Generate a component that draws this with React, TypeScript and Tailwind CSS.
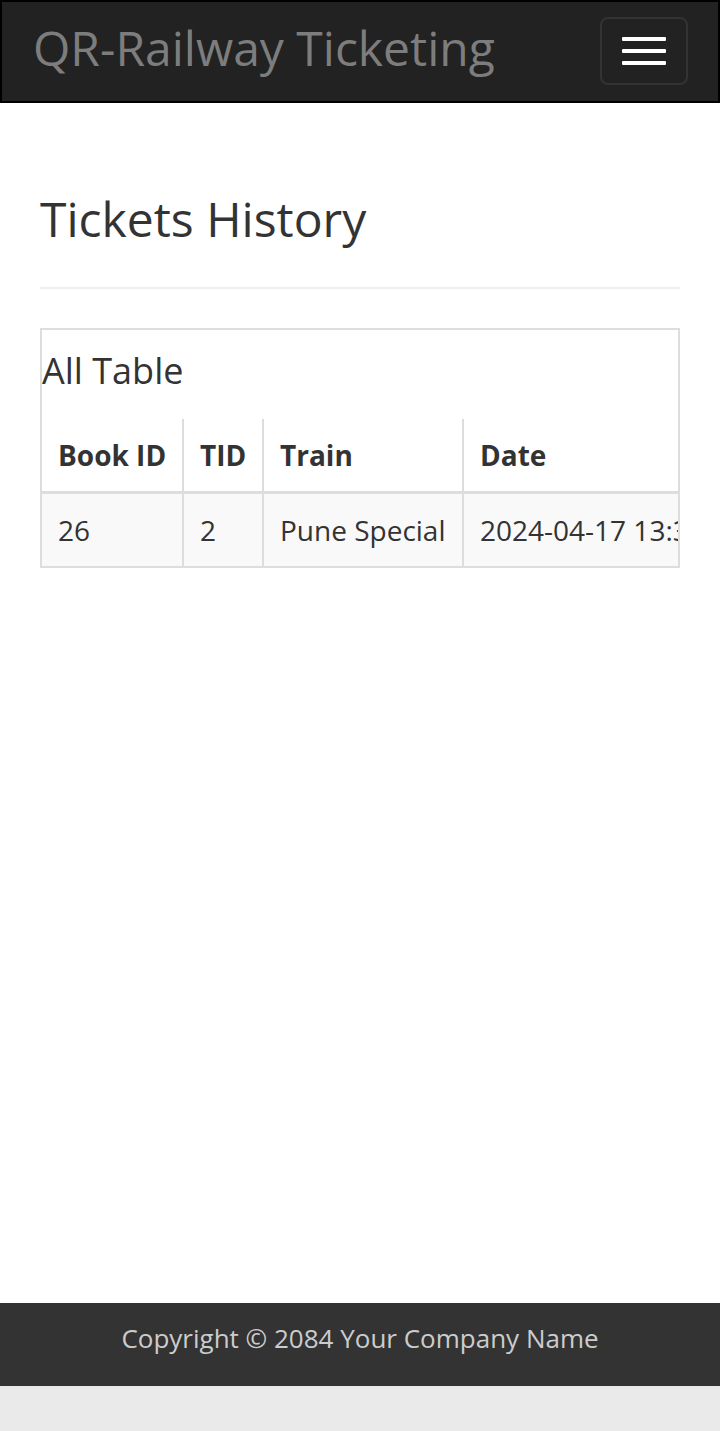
import React from "react";

export default function App() {
  const font = { fontFamily: '"Open Sans", "Liberation Sans", sans-serif' };
  return (
    <div className="min-h-[1431px] flex flex-col bg-[#eaeaea] text-[#333]" style={font}>
      <div className="bg-white flex flex-col">
        <nav className="h-[103px] bg-[#222] border-2 border-black flex items-center justify-between pl-[31px] pr-[30px]">
          <span className="text-[48px] leading-none text-[#7d7d7d] -mt-[8px]">QR-Railway Ticketing</span>
          <button className="w-[88px] h-[68px] border-2 border-[#333] rounded-[8px] flex flex-col items-center justify-center gap-[8px] -mt-[2px]">
            <span className="block w-[44px] h-[4px] bg-white rounded-[1px]" />
            <span className="block w-[44px] h-[4px] bg-white rounded-[1px]" />
            <span className="block w-[44px] h-[4px] bg-white rounded-[1px]" />
          </button>
        </nav>
        <main className="px-[40px] h-[1200px]">
          <div className="mt-[90px] pb-[41px] border-b-2 border-[#eee] mb-[39px]">
            <h1 className="text-[48px] leading-[1.1] font-normal">Tickets History</h1>
          </div>
          <div className="border-2 border-[#ddd] overflow-hidden">
            <div className="w-[900px]">
              <div className="text-[36px] leading-[40px] pt-[21px] pb-[28px]">All Table</div>
              <div className="flex text-[28px] leading-[40px] font-bold border-b-[3px] border-[#ddd] whitespace-nowrap">
                <div className="w-[140px] shrink-0 px-[16px] py-[16px]">Book ID</div>
                <div className="w-[80px] shrink-0 px-[16px] py-[16px] border-l-2 border-[#ddd]">TID</div>
                <div className="w-[200px] shrink-0 px-[16px] py-[16px] border-l-2 border-[#ddd]">Train</div>
                <div className="flex-1 px-[16px] py-[16px] border-l-2 border-[#ddd]">Date</div>
              </div>
              <div className="flex text-[28px] leading-[40px] bg-[#f9f9f9] whitespace-nowrap">
                <div className="w-[140px] shrink-0 px-[16px] py-[16px]">26</div>
                <div className="w-[80px] shrink-0 px-[16px] py-[16px] border-l-2 border-[#ddd]">2</div>
                <div className="w-[200px] shrink-0 px-[16px] py-[16px] border-l-2 border-[#ddd]">Pune Special</div>
                <div className="flex-1 px-[16px] py-[16px] border-l-2 border-[#ddd]">2024-04-17 13:30:00</div>
              </div>
            </div>
          </div>
        </main>
      </div>
      <footer className="h-[83px] bg-[#333] text-[#ccc] text-[26px] flex items-center justify-center pb-[12px]">
        Copyright © 2084 Your Company Name
      </footer>
    </div>
  );
}
